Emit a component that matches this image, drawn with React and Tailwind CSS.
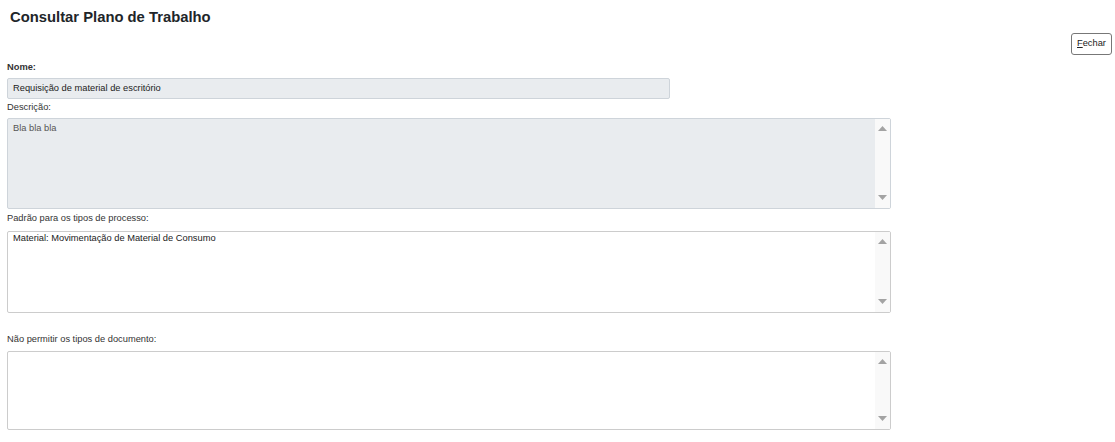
const Arrow = ({ dir }) => (
  <svg width="9" height="5" viewBox="0 0 9 5" className="block">
    {dir === "up" ? (
      <polygon points="4.5,0 9,5 0,5" fill="#a3a3a3" />
    ) : (
      <polygon points="0,0 9,0 4.5,5" fill="#a3a3a3" />
    )}
  </svg>
);

const FakeScroll = () => (
  <div className="w-[15px] h-full bg-[#f9f9f9] flex flex-col items-center justify-between pt-[7px] pb-[8px]">
    <Arrow dir="up" />
    <Arrow dir="down" />
  </div>
);

const Label = ({ children, bold, className = "" }) => (
  <div
    className={`h-[11px] leading-[11px] text-[9.3px] text-[#333] ${bold ? "font-bold" : ""} ${className}`}
  >
    {children}
  </div>
);

const Box = ({ height, bg, text, textColor, className = "" }) => (
  <div
    className={`w-[884px] ${height} ${bg} border border-[#ccc] rounded-[2px] flex ${className}`}
  >
    <div className={`flex-1 pl-[5px] text-[9.3px] leading-[13px] ${textColor}`}>
      {text}
    </div>
    <FakeScroll />
  </div>
);

export default function App() {
  return (
    <div className="w-[1115px] h-[442px] bg-white px-[7px] font-['Liberation_Sans',Arial,sans-serif] overflow-hidden">
      <h1 className="pl-[3px] pt-[8px] h-[33px] text-[14.8px] leading-[18px] font-bold text-[#212529]">
        Consultar Plano de Trabalho
      </h1>

      <div className="flex justify-end -mr-[4px]">
        <button className="w-[41px] h-[22px] border border-[#777] rounded-[3px] bg-white text-[9.3px] text-[#222] leading-none">
          <span className="underline">F</span>echar
        </button>
      </div>

      <Label bold className="mt-[7px]">Nome:</Label>
      <div className="mt-[5px] w-[663px] h-[21px] bg-[#e9ecef] border border-[#ced4da] rounded-[2px] pl-[5px] flex items-center text-[9.3px] text-[#222]">
        Requisição de material de escritório
      </div>

      <Label className="mt-[3px]">Descrição:</Label>
      <Box
        className="mt-[5px]"
        height="h-[91px]"
        bg="bg-[#e9ecef] border-[#ced4da]"
        textColor="text-[#555] pt-[3px]"
        text="Bla bla bla"
      />

      <Label className="mt-[4px]">Padrão para os tipos de processo:</Label>
      <Box
        className="mt-[7px]"
        height="h-[82px]"
        bg="bg-white"
        textColor="text-[#222] pt-0"
        text="Material: Movimentação de Material de Consumo"
      />

      <Label className="mt-[21px]">Não permitir os tipos de documento:</Label>
      <Box
        className="mt-[6px]"
        height="h-[79px]"
        bg="bg-white"
        textColor="text-[#222]"
        text=""
      />
    </div>
  );
}
